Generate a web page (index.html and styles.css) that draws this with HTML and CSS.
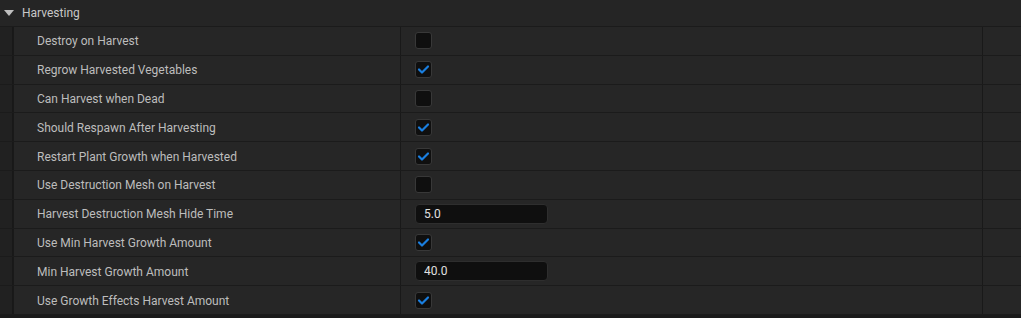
FILE: index.html
```html
<!DOCTYPE html>
<html lang="en">
<head>
    <meta charset="UTF-8">
    <title>Details - Harvesting</title>
    <link rel="stylesheet" href="styles.css">
</head>
<body>
    <!-- Категория свойств -->
    <div class="details">
        <div class="category">
            <span class="arrow"></span>
            <span class="category-title">Harvesting</span>
        </div>

        <div class="row">
            <div class="indent"></div>
            <div class="name">Destroy on Harvest</div>
            <div class="value"><span class="checkbox"></span></div>
            <div class="extra"></div>
        </div>
        <div class="row">
            <div class="indent"></div>
            <div class="name">Regrow Harvested Vegetables</div>
            <div class="value"><span class="checkbox checked"></span></div>
            <div class="extra"></div>
        </div>
        <div class="row">
            <div class="indent"></div>
            <div class="name">Can Harvest when Dead</div>
            <div class="value"><span class="checkbox"></span></div>
            <div class="extra"></div>
        </div>
        <div class="row">
            <div class="indent"></div>
            <div class="name">Should Respawn After Harvesting</div>
            <div class="value"><span class="checkbox checked"></span></div>
            <div class="extra"></div>
        </div>
        <div class="row">
            <div class="indent"></div>
            <div class="name">Restart Plant Growth when Harvested</div>
            <div class="value"><span class="checkbox checked"></span></div>
            <div class="extra"></div>
        </div>
        <div class="row">
            <div class="indent"></div>
            <div class="name">Use Destruction Mesh on Harvest</div>
            <div class="value"><span class="checkbox"></span></div>
            <div class="extra"></div>
        </div>
        <div class="row">
            <div class="indent"></div>
            <div class="name">Harvest Destruction Mesh Hide Time</div>
            <div class="value"><input class="number" type="text" value="5.0"></div>
            <div class="extra"></div>
        </div>
        <div class="row">
            <div class="indent"></div>
            <div class="name">Use Min Harvest Growth Amount</div>
            <div class="value"><span class="checkbox checked"></span></div>
            <div class="extra"></div>
        </div>
        <div class="row">
            <div class="indent"></div>
            <div class="name">Min Harvest Growth Amount</div>
            <div class="value"><input class="number" type="text" value="40.0"></div>
            <div class="extra"></div>
        </div>
        <div class="row">
            <div class="indent"></div>
            <div class="name">Use Growth Effects Harvest Amount</div>
            <div class="value"><span class="checkbox checked"></span></div>
            <div class="extra"></div>
        </div>
    </div>

    <script>
        // Рисуем галочки в отмеченных чекбоксах
        document.querySelectorAll('.checkbox.checked').forEach(function(box) {
            box.innerHTML = '<svg width="13" height="13" viewBox="0 0 13 13"><path d="M2 6.5 L5 9.5 L11 3.5" fill="none" stroke="#1a7fe0" stroke-width="2.2" stroke-linecap="round" stroke-linejoin="round"/></svg>';
        });
    </script>
</body>
</html>
```

FILE: styles.css
```css
/* Основа страницы */
body {
    margin: 0;
    background-color: #1a1a1a;
    font-family: Roboto, "Liberation Sans", sans-serif;
    font-size: 12px;
    color: #bdbdbd;
}

/* Заголовок категории */
.category {
    display: flex;
    align-items: center;
    height: 27px;
    background-color: #252525;
    border-bottom: 1px solid #1b1b1b;
    box-sizing: border-box;
}

.arrow {
    width: 0;
    height: 0;
    margin-left: 4px;
    border-left: 5px solid transparent;
    border-right: 5px solid transparent;
    border-top: 6px solid #c0c0c0;
}

.category-title {
    margin-left: 8px;
    color: #c8c8c8;
}

/* Строка свойства */
.row {
    display: grid;
    grid-template-columns: 13px 386px 581px 1fr;
    column-gap: 1px;
    height: 28.8px;
    background-color: #191919;
    border-bottom: 1px solid #1b1b1b;
    box-sizing: border-box;
}

.indent {
    background-color: #212121;
    border-right: 1px solid #181818;
}

.name {
    display: flex;
    align-items: center;
    padding-left: 23px;
    padding-top: 1px;
    background-color: #262626;
}

.value {
    display: flex;
    align-items: center;
    padding-left: 14px;
    background-color: #262626;
}

.extra {
    background-color: #262626;
}

/* Чекбокс */
.checkbox {
    display: flex;
    align-items: center;
    justify-content: center;
    width: 17px;
    height: 17px;
    box-sizing: border-box;
    background-color: #0f0f0f;
    border: 1px solid #383838;
    border-radius: 3px;
}

/* Числовое поле */
.number {
    width: 133px;
    height: 20px;
    box-sizing: border-box;
    padding: 0 0 0 8px;
    background-color: #0f0f0f;
    border: 1px solid #2e2e2e;
    border-radius: 4px;
    font-family: Roboto, "Liberation Sans", sans-serif;
    font-size: 12px;
    color: #e0e0e0;
    outline: none;
}
```
